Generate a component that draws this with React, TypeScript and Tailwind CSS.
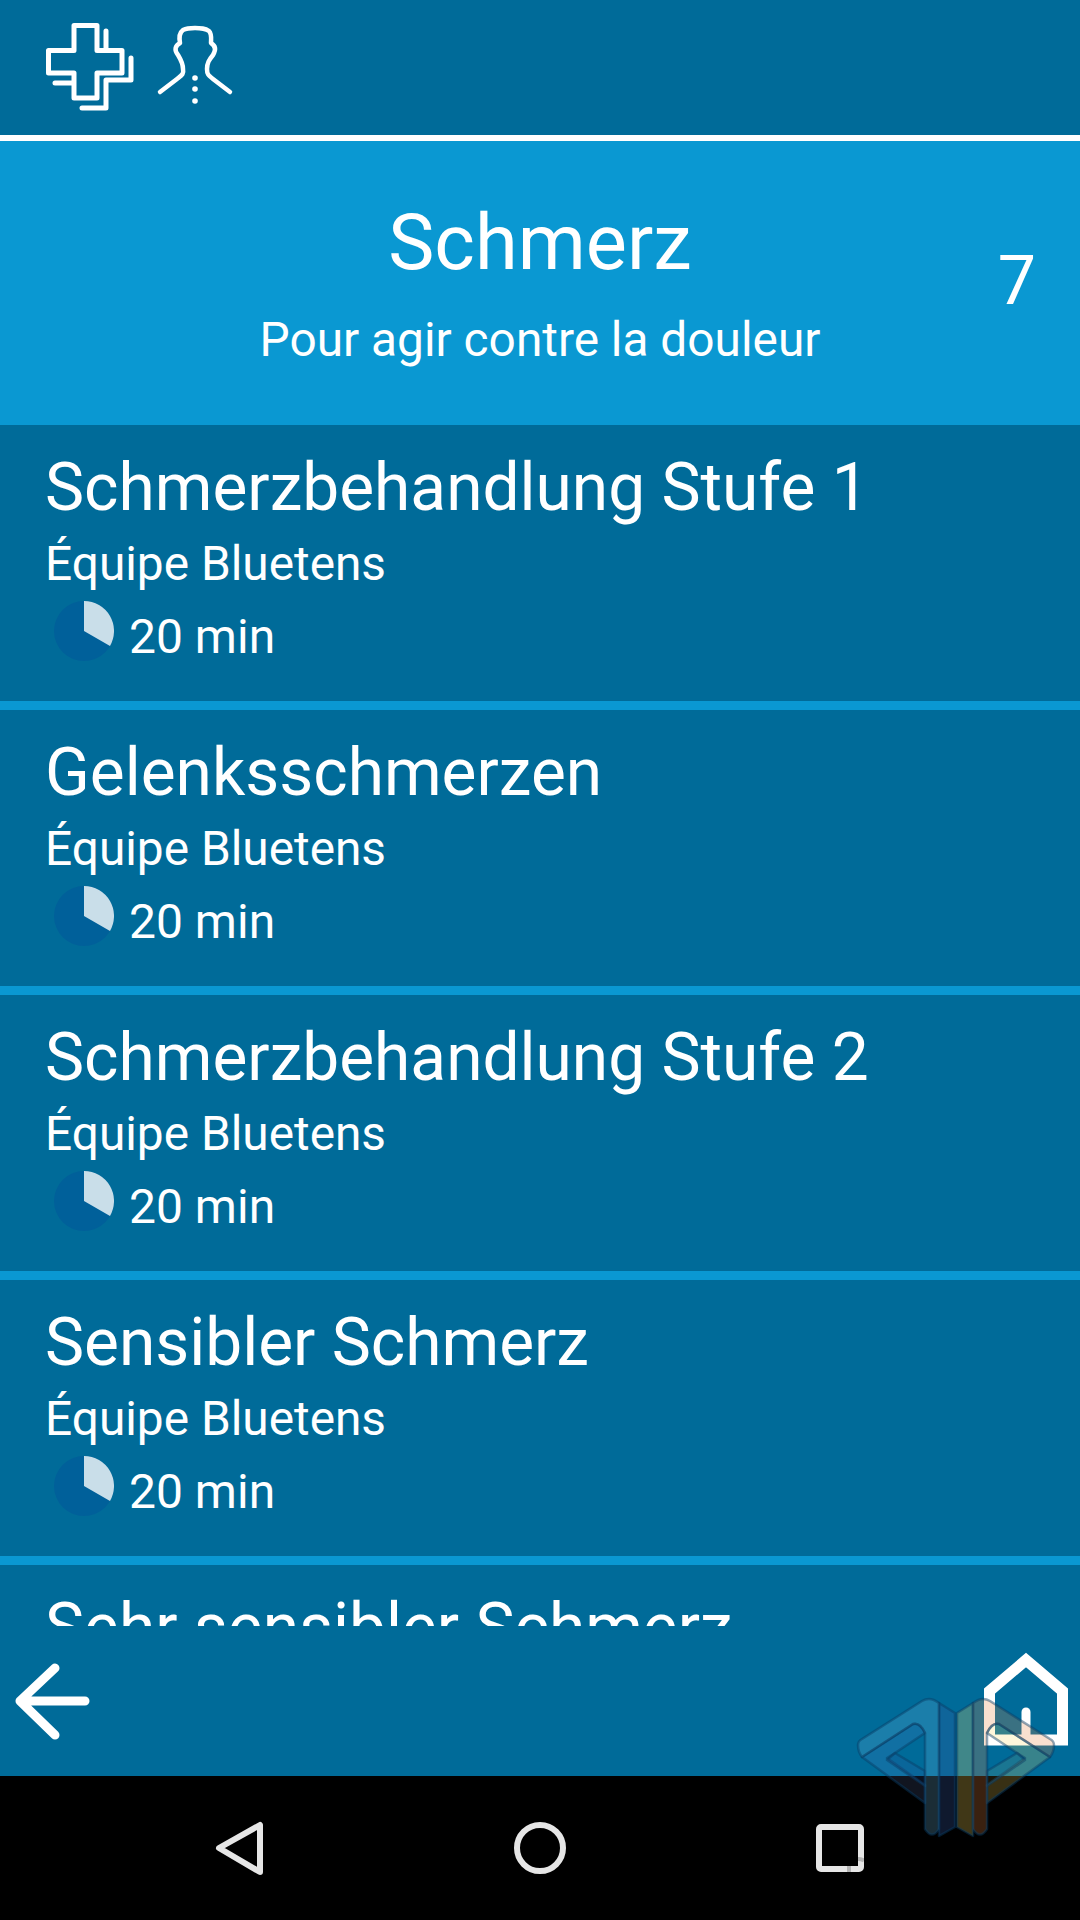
import { Fragment } from 'react';

const rows = ['Schmerzbehandlung Stufe 1', 'Gelenksschmerzen', 'Schmerzbehandlung Stufe 2', 'Sensibler Schmerz', 'Sehr sensibler Schmerz'];

function CrossIcon() {
  return (
    <svg width="92" height="92" viewBox="45 21 92 92" fill="none" stroke="white" strokeWidth="5" strokeLinecap="round" strokeLinejoin="round">
      <path d="M74 25.5H97V50.5H122V73H97V98H74V73H48.5V50.5H74Z" />
      <path d="M106 31V50M131 58V80H106V108H82M55 83H72" />
    </svg>
  );
}

function NeckIcon() {
  return (
    <svg width="80" height="85" viewBox="155 22 80 85" fill="none" stroke="white" strokeWidth="4.5" strokeLinecap="round" strokeLinejoin="round">
      <path d="M160 92L177 79C182 75 184 74 183 69C183 63 181 60 178 55C174 50 175 46 180 43C179 37 179 33 183 30C187 28 190 28 195 28C201 28 205 28 209 31C212 34 211 39 211 43C216 46 216 50 213 55C209 60 207 63 207 69C207 74 208 75 213 79L230 92" />
      <circle cx="195" cy="78" r="2.8" fill="white" stroke="none" />
      <circle cx="195" cy="89" r="2.8" fill="white" stroke="none" />
      <circle cx="195" cy="101" r="2.8" fill="white" stroke="none" />
    </svg>
  );
}

function PieIcon() {
  return (
    <svg width="60" height="60" viewBox="0 0 60 60">
      <circle cx="30" cy="30" r="30" fill="#00609a" />
      <path d="M30 0A30 30 0 0 1 56 45L30 30Z" fill="#c9dee9" />
    </svg>
  );
}

function Watermark() {
  return (
    <svg className="absolute left-[850px] top-[1690px]" width="212" height="152" viewBox="850 1690 212 152" fill="none">
      <g stroke="#083c64" strokeOpacity="0.45" strokeWidth="2.5" strokeLinejoin="round">
        {/* left half */}
        <path d="M862 1757L913 1724Q920 1722 925 1733L895 1753L887 1758L925 1785V1803Z" fill="rgb(120,150,230)" fillOpacity="0.14" />
        <path d="M887 1760L895 1753L925 1771V1786Z" fill="rgb(50,85,160)" fillOpacity="0.2" />
        <path d="M939 1703L955 1713V1827L939 1836Z" fill="rgb(50,85,160)" fillOpacity="0.29" />
        <path d="M922 1701Q930 1696 939 1703V1829Q932 1840 925 1829V1733Q920 1722 913 1724L862 1757Q858 1752 858 1745Q858 1741 862 1739Z" fill="rgb(112,188,224)" fillOpacity="0.24" />
        {/* right half */}
        <path d="M1050 1757L999 1724Q992 1722 987 1733L1017 1753L1025 1758L987 1785V1803Z" fill="rgb(255,220,90)" fillOpacity="0.22" />
        <path d="M1025 1760L1017 1753L987 1771V1786Z" fill="rgb(255,220,90)" fillOpacity="0.1" />
        <path d="M973 1703L957 1713V1827L973 1836Z" fill="rgb(255,220,90)" fillOpacity="0.25" />
        <path d="M990 1701Q982 1696 973 1703V1829Q980 1840 987 1829V1733Q992 1722 999 1724L1050 1757Q1054 1752 1054 1745Q1054 1741 1050 1739Z" fill="rgb(230,130,65)" fillOpacity="0.25" />
      </g>
    </svg>
  );
}

export default function App() {
  return (
    <div className="relative flex h-[1920px] w-[1080px] flex-col overflow-hidden bg-[#006b99] text-white" style={{ fontFamily: 'Roboto, sans-serif' }}>
      {/* Top bar */}
      <div className="flex h-[135px] shrink-0 items-start pl-[45px] pt-[21px]">
        <CrossIcon />
        <div className="ml-[18px] pt-[1px]"><NeckIcon /></div>
      </div>
      <div className="h-[6px] shrink-0 bg-white" />

      {/* Heading */}
      <div className="relative flex h-[284px] shrink-0 flex-col items-center bg-[#0a98d2]">
        <div className="mt-[57px] text-[77.6px] leading-[90px]">Schmerz</div>
        <div className="mt-[24px] text-[47.8px] leading-[56px]">Pour agir contre la douleur</div>
        <span className="absolute right-[44px] top-[100px] text-[68px] leading-[80px]">7</span>
      </div>

      {/* List */}
      <div className="h-[1201px] shrink-0 overflow-hidden">
        {rows.map((title) => (
          <Fragment key={title}>
            <div className="h-[276px] pl-[45px] pt-[25px]">
              <div className="text-[65.8px] leading-[76px]">{title}</div>
              <div className="mt-[12px] text-[47.8px] leading-[52px]">Équipe Bluetens</div>
              <div className="mt-[11px] flex items-start">
                <div className="ml-[9px]"><PieIcon /></div>
                <span className="ml-[15px] mt-[6px] text-[48px] leading-[60px]">20 min</span>
              </div>
            </div>
            <div className="h-[9px] bg-[#0a98d2]" />
          </Fragment>
        ))}
      </div>

      {/* Bottom bar */}
      <div className="flex h-[150px] shrink-0 items-start justify-between pl-[10px] pr-[8px]">
        <svg className="mt-[29px] blur-[0.6px]" width="85" height="90" viewBox="10 1655 85 90" fill="none" stroke="white" strokeWidth="9" strokeLinecap="round" strokeLinejoin="round">
          <path d="M55 1668L20 1701L55 1735M20 1701H85" />
        </svg>
        <svg className="mt-[24px] blur-[0.6px]" width="92" height="100" viewBox="980 1650 92 100" fill="none" stroke="white" strokeWidth="11" strokeLinejoin="miter">
          <path d="M1026 1660L989.5 1691V1740H1062.5V1691Z" />
          <path d="M1026 1712V1739" strokeWidth="9" strokeLinecap="round" />
        </svg>
      </div>

      {/* Android nav */}
      <div className="flex h-[144px] shrink-0 items-center bg-black">
        <svg className="ml-[210px]" width="60" height="66" viewBox="210 1815 60 66" fill="none" stroke="#e6e6e6" strokeWidth="6" strokeLinejoin="round">
          <path d="M219 1848L260 1825V1872Z" />
        </svg>
        <div className="ml-[244px] h-[52px] w-[52px] rounded-full border-[6px] border-[#e6e6e6]" />
        <svg className="ml-[250px]" width="48" height="48" viewBox="0 0 48 48" fill="none">
          <rect x="3" y="3" width="42" height="42" rx="2" stroke="#e6e6e6" strokeWidth="6" />
          <path d="M33 42V48M42 35Q45 35 48 36.5" stroke="#b5b5b5" strokeWidth="4" />
        </svg>
      </div>

      <Watermark />
    </div>
  );
}
